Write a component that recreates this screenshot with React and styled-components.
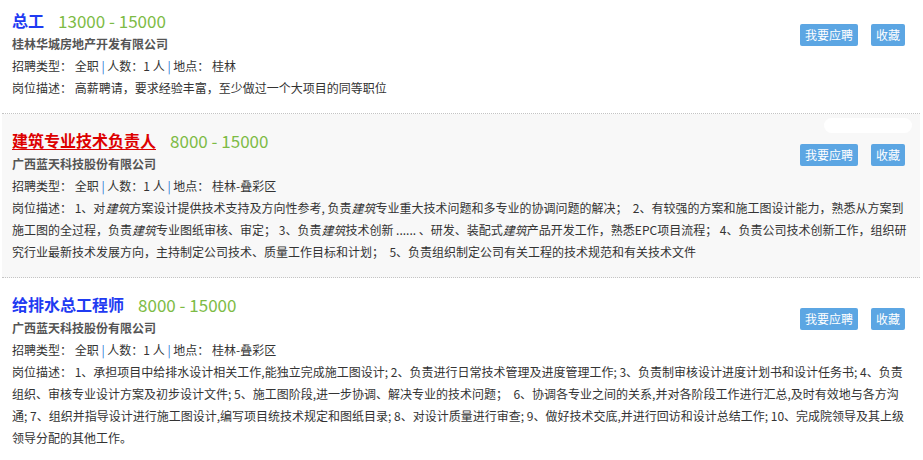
import React from 'react'
import styled, { createGlobalStyle } from 'styled-components'

const GlobalStyle = createGlobalStyle`
  body {
    margin: 0;
    background: #fff;
    font-family: "Noto Sans CJK SC", "Noto Sans", sans-serif;
    color: #333;
  }
`

const jobs = [
  {
    title: '总工',
    salary: '13000 - 15000',
    company: '桂林华城房地产开发有限公司',
    place: '桂林',
    desc: '高薪聘请，要求经验丰富，至少做过一个大项目的同等职位',
  },
  {
    title: '建筑专业技术负责人',
    salary: '8000 - 15000',
    company: '广西蓝天科技股份有限公司',
    place: '桂林-叠彩区',
    active: true,
    desc:
      '1、对建筑方案设计提供技术支持及方向性参考, 负责建筑专业重大技术问题和多专业的协调问题的解决；\u00a0 2、有较强的方案和施工图设计能力，熟悉从方案到施工图的全过程，负责建筑专业图纸审核、审定； 3、负责建筑技术创新 ...... 、研发、装配式建筑产品开发工作，熟悉EPC项目流程； 4、负责公司技术创新工作，组织研究行业最新技术发展方向，主持制定公司技术、质量工作目标和计划；\u00a0 5、负责组织制定公司有关工程的技术规范和有关技术文件',
  },
  {
    title: '给排水总工程师',
    salary: '8000 - 15000',
    company: '广西蓝天科技股份有限公司',
    place: '桂林-叠彩区',
    desc:
      '1、承担项目中给排水设计相关工作,能独立完成施工图设计; 2、负责进行日常技术管理及进度管理工作; 3、负责制审核设计进度计划书和设计任务书; 4、负责组织、审核专业设计方案及初步设计文件; 5、施工图阶段,进一步协调、解决专业的技术问题；\u00a0 6、协调各专业之间的关系,并对各阶段工作进行汇总,及时有效地与各方沟通; 7、组织并指导设计进行施工图设计,编写项目统技术规定和图纸目录; 8、对设计质量进行审查; 9、做好技术交底,并进行回访和设计总结工作; 10、完成院领导及其上级领导分配的其他工作。',
  },
]

// search keyword is shown in italics inside the description
const highlight = (text, word) =>
  text.split(word).flatMap((part, i) => (i === 0 ? [part] : [<em key={i}>{word}</em>, part]))

export default function App() {
  return (
    <>
      <GlobalStyle />
      <JobList>
        {jobs.map((job, i) => (
          <JobItem key={i} $active={job.active}>
            {job.active && <Smudge />}
            <JobHeader>
              <JobInfo>
                <TitleRow>
                  <JobTitle $active={job.active}>{job.title}</JobTitle>
                  <Salary>{job.salary}</Salary>
                </TitleRow>
                <Company>{job.company}</Company>
                <InfoLine>
                  招聘类型：&nbsp;全职 <Bar>|</Bar> 人数：1 人 <Bar>|</Bar> 地点：&nbsp;{job.place}
                </InfoLine>
              </JobInfo>
              <Actions>
                <ActionButton>我要应聘</ActionButton>
                <ActionButton>收藏</ActionButton>
              </Actions>
            </JobHeader>
            <Description>
              岗位描述：&nbsp;{highlight(job.desc, '建筑')}
            </Description>
          </JobItem>
        ))}
      </JobList>
    </>
  )
}

const JobList = styled.div`
  width: 918px;
  margin-left: 2px;
  margin-top: -6px;
`
const JobItem = styled.div`
  position: relative;
  padding: 13px 15px 14px 10px;
  background: ${p => (p.$active ? '#f8f8f8' : '#fff')};
  border-bottom: 1px dotted #c4c4c4;

  &:last-child {
    border-bottom: none;
  }
`
const Smudge = styled.div`
  position: absolute;
  top: 4px;
  right: 8px;
  width: 88px;
  height: 15px;
  border-radius: 8px;
  background: #fff;
`
const JobHeader = styled.div`
  display: flex;
  justify-content: space-between;
  align-items: flex-start;
`
const JobInfo = styled.div`
  display: flex;
  flex-direction: column;
`
const TitleRow = styled.div`
  display: flex;
  align-items: center;
  height: 26px;
`
const JobTitle = styled.a`
  font-size: 16px;
  font-weight: bold;
  color: ${p => (p.$active ? '#dd0000' : '#1f3bf2')};
  text-decoration: ${p => (p.$active ? 'underline' : 'none')};
  text-underline-offset: 2px;
  cursor: pointer;
`
const Salary = styled.span`
  margin-left: 14px;
  font-size: 17px;
  color: #7dbb45;
`
const Company = styled.div`
  font-size: 12px;
  line-height: 22px;
  font-weight: bold;
  color: #555;
`
const InfoLine = styled.div`
  font-size: 12px;
  line-height: 22px;
  color: #333;
`
const Bar = styled.span`
  color: #2c7bd6;
`
const Actions = styled.div`
  display: flex;
  gap: 13px;
  margin-top: 17px;
`
const ActionButton = styled.button`
  height: 22px;
  padding: 0 5px;
  border: none;
  border-radius: 2px;
  background: #5ca6e3;
  color: #fff;
  font-family: inherit;
  font-size: 12px;
  line-height: 22px;
  cursor: pointer;
`
const Description = styled.div`
  margin-right: -4px;
  font-size: 12px;
  line-height: 22px;
  color: #333;

  & em {
    font-style: italic;
  }
`
